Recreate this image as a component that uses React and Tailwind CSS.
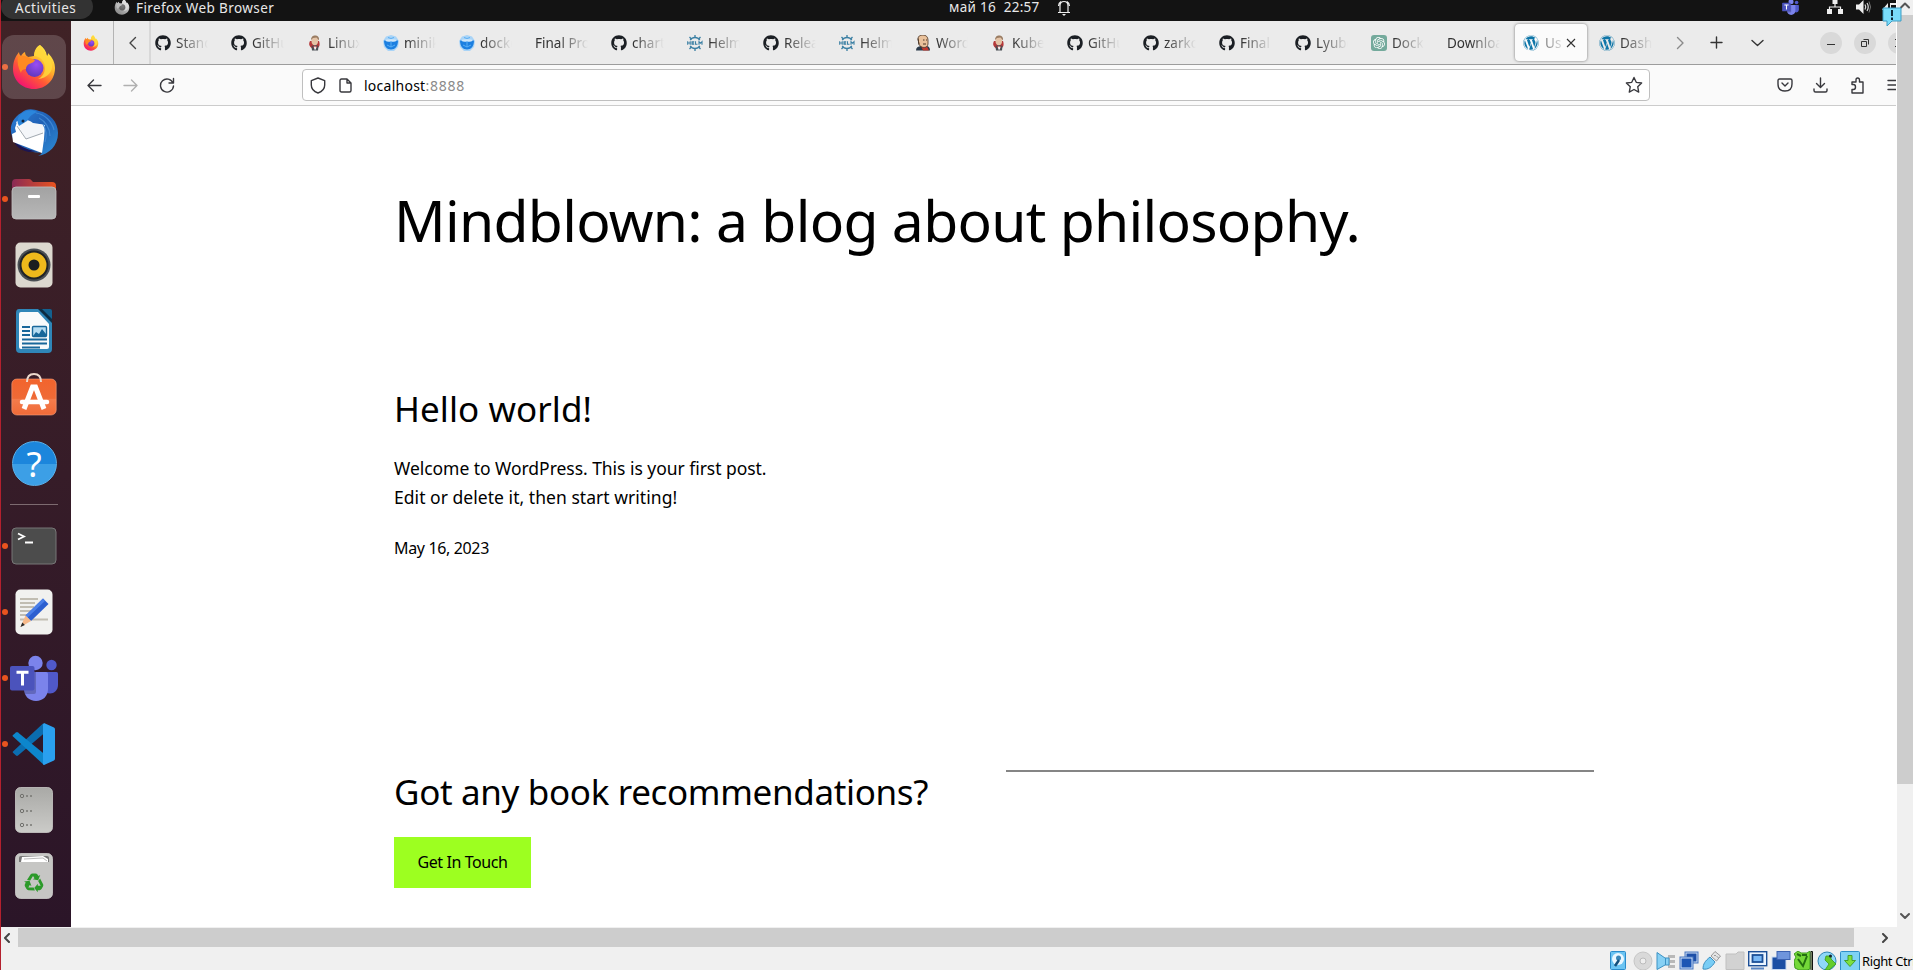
import { FaGithub, FaWordpress } from "react-icons/fa";
import { SiOpenai } from "react-icons/si";

/* ---------- colour logos ---------- */

function Firefox({ id, className, mono }) {
  return (
    <svg viewBox="0 0 44 46" className={className}>
      <defs>
        <linearGradient id={id + "a"} x1="0.85" y1="0.1" x2="0.25" y2="0.95">
          <stop offset="0" stopColor={mono ? "#f0f0f0" : "#fff04a"} />
          <stop offset="0.35" stopColor={mono ? "#c9c9c9" : "#ffb52a"} />
          <stop offset="0.65" stopColor={mono ? "#a5a5a5" : "#ff5a35"} />
          <stop offset="1" stopColor={mono ? "#8c8c8c" : "#f3156f"} />
        </linearGradient>
        <radialGradient id={id + "b"} cx="0.6" cy="0.3" r="0.8">
          <stop offset="0" stopColor={mono ? "#777" : "#9a4df5"} />
          <stop offset="1" stopColor={mono ? "#5a5a5a" : "#5a35b8"} />
        </radialGradient>
      </defs>
      <path
        d="M28 1c4 3 6 6 7 11 1-1 1-2 1-3 5 5 7 10 7 15 0 12-9 21-21 21S1 36 1 25c0-7 2-12 6-17 0 2 1 3 2 4 1-2 2-3 4-4 0 2 1 4 3 5l6-1c0-5 2-9 6-11z"
        fill={`url(#${id}a)`}
      />
      <circle cx="22.500" cy="24" r="9" fill={`url(#${id}b)`} />
      <path
        d="M6 13c5-2 9-1 12 1l5 2c-1 3-4 3-6 4-2 1-3 3-3 5-3 0-5 2-5 4C6 24 5 18 6 13z"
        fill={mono ? "#bdbdbd" : "#ff8a22"}
      />
      <path
        d="M28 1c-4 3-6 7-6 11 6 0 11 5 11 12 0 5-3 9-7 11 9-1 15-7 14-14-1-5-3-8-6-10-2-3-3-7-6-10z"
        fill={mono ? "#dedede" : "#ffd83c"}
        opacity="0.85"
      />
    </svg>
  );
}

function Thunderbird() {
  return (
    <svg viewBox="0 0 50 50" className="size-[50px]">
      <defs>
        <linearGradient id="tb1" x1="0" y1="0" x2="1" y2="1">
          <stop offset="0" stopColor="#2d7fd6" />
          <stop offset="0.5" stopColor="#1f5fb4" />
          <stop offset="1" stopColor="#2e8fd8" />
        </linearGradient>
      </defs>
      <path
        d="M12 5C18 0 24 1 30 3c11 2 19 11 19 22 0 13-9 21-20 23 3-1 4-3 4-4-8 2-20-2-26-9C-1 26 0 12 12 5z"
        fill="url(#tb1)"
      />
      <path d="M5 34c3 6 9 9 15 10l12-1c-10 1-19-4-27-9z" fill="#1c1552" />
      <path d="M8 14l28 3-1 14-2 14L4 34l-1-8 4-2-1-4z" fill="#fff" />
      <path d="M7 14c5-3 12-3 17 1 5 1 9 1 11 2l-1 9-17 5z" fill="#f4f6f9" />
      <path d="M8 18l9 13 17-6" fill="none" stroke="#8d959e" strokeWidth="0.8" />
      <path d="M10 8c5-6 13-7 18-4-5 2-8 5-10 9l-8 5c-2-3-2-7 0-10z" fill="#2b86dc" />
      <path d="M27 5c8 1 16 8 18 17M30 10c6 3 11 10 11 18M34 16c3 5 4 12 2 18" stroke="#3f86d2" strokeWidth="1.200" fill="none" />
      <circle cx="14" cy="13" r="1.500" fill="#10243e" />
    </svg>
  );
}

function Files() {
  return (
    <svg viewBox="0 0 46 42" className="h-[42px] w-[46px]">
      <defs>
        <linearGradient id="fl1">
          <stop offset="0" stopColor="#8a2a55" />
          <stop offset="1" stopColor="#e95420" />
        </linearGradient>
        <linearGradient id="fl2" x1="0" y1="0" x2="0" y2="1">
          <stop offset="0" stopColor="#a2a2a2" />
          <stop offset="1" stopColor="#b8b8b8" />
        </linearGradient>
      </defs>
      <path d="M1 5q0-4 4-4h13q2 0 3 2l1 1h19q4 0 4 4v8H1z" fill="url(#fl1)" />
      <rect x="1" y="9" width="44" height="32" rx="4" fill="url(#fl2)" stroke="#c2c2c2" strokeWidth="0.8" />
      <rect x="17" y="17" width="12" height="3" rx="1" fill="#fff" />
    </svg>
  );
}

function Rhythmbox() {
  return (
    <svg viewBox="0 0 38 46" className="h-[46px] w-[38px]">
      <rect x="0.500" y="0.500" width="37" height="45" rx="5" fill="#dcd8cf" />
      <circle cx="19" cy="23" r="16.500" fill="#4a4f54" />
      <circle cx="19" cy="23" r="14.500" fill="#202326" />
      <circle cx="19" cy="23" r="12.500" fill="#eeb91c" />
      <circle cx="19" cy="23" r="5.500" fill="#1b1d1f" />
    </svg>
  );
}

function Writer() {
  return (
    <svg viewBox="0 0 38 46" className="h-[46px] w-[38px]">
      <path d="M4 1h21l12 12v28q0 4-4 4H5q-4 0-4-4V5q0-4 3-4z" fill="#2f86b8" />
      <path d="M6 4h17l11 12v23q0 2-2 2H6q-2 0-2-2V6q0-2 2-2z" fill="#f8fafb" />
      <path d="M24 1l13 13V3q0-2-2-2z" fill="#14618f" />
      <path d="M23 1l14 14v-4L27 1z" fill="#0d2c42" />
      <path d="M7 19h8M7 23h8M7 27h8M7 31.500h25M7 35.500h25M7 39.500h18" stroke="#18679a" strokeWidth="1.800" />
      <rect x="17.500" y="18.500" width="14" height="10" rx="1" fill="#b5dcf2" stroke="#18679a" strokeWidth="1.400" />
      <path d="M18 28l3-4 3 2 3-5 4 5v2z" fill="#18679a" />
    </svg>
  );
}

function Software() {
  return (
    <svg viewBox="0 0 46 44" className="h-[44px] w-[46px]">
      <defs>
        <linearGradient id="sw1" x1="0" y1="0" x2="0" y2="1">
          <stop offset="0" stopColor="#f2642d" />
          <stop offset="0.540" stopColor="#ef6a36" />
          <stop offset="0.550" stopColor="#f47c4c" />
          <stop offset="1" stopColor="#f06a38" />
        </linearGradient>
      </defs>
      <rect x="0.800" y="7" width="44.400" height="36" rx="5" fill="url(#sw1)" stroke="#f5a07c" strokeWidth="0.600" />
      <path d="M16 10c0-5 2-8 7-8s7 3 7 8" fill="none" stroke="#ecd9cc" strokeWidth="2" />
      <path d="M13 37l8.500-22h3L33 37" fill="none" stroke="#fff" strokeWidth="5" />
      <path d="M11 30h25" stroke="#fff" strokeWidth="4.500" strokeLinecap="round" />
    </svg>
  );
}

function Help() {
  return (
    <div className="flex size-[45px] items-center justify-center rounded-full border border-[#5ab0ea] bg-linear-to-b from-[#1c86dc] from-50% to-[#3c9fe6] to-50% text-[35px] leading-none text-white">
      ?
    </div>
  );
}

function Terminal() {
  return (
    <svg viewBox="0 0 46 38" className="h-[38px] w-[46px]">
      <rect x="1" y="1" width="44" height="36" rx="4" fill="#4c4c4c" stroke="#777" strokeWidth="1" />
      <path d="M7 6.500l6 3-6 3M14 15.500h8" fill="none" stroke="#fff" strokeWidth="1.800" />
    </svg>
  );
}

function Editor() {
  return (
    <svg viewBox="0 0 38 46" className="h-[46px] w-[38px]">
      <rect x="0.500" y="0.500" width="37" height="45" rx="5" fill="#f1f1ef" />
      <path d="M5 10h18M5 14h15M5 18h14M5 22h13M5 26h10M5 30.500h28" stroke="#c1bdb2" strokeWidth="1.800" />
      <path d="M28 9.500l5.500 5.500L16 32l-5.500-5.500z" fill="#2c5fd0" />
      <path d="M28 9.500l2.200 2.200L12.600 28.600l-2.100-2.100z" fill="#4a7fe8" />
      <path d="M10.500 26.500L16 32l-10.500 6z" fill="#f6b98a" />
      <path d="M5.500 38l1.800-4.500 2.600 2.500z" fill="#2b2b2b" />
    </svg>
  );
}

function Teams({ className }) {
  return (
    <svg viewBox="0 0 48 46" className={className}>
      <circle cx="41.500" cy="10" r="5.200" fill="#5059c9" />
      <circle cx="25.500" cy="8" r="7.200" fill="#7b83eb" />
      <path d="M35 17h11.500q1.500 0 1.500 1.500V30c0 5-4 8.500-8 8.500-3 0-5-1-6-3z" fill="#5059c9" />
      <path d="M14 17h22q2 0 2 2v15c0 7-5 12-12 12s-12-5-12-12z" fill="#7b83eb" />
      <path d="M14 17h12v20q0 2-2 2H15q-1-2-1-5z" fill="#000" opacity="0.2" />
      <rect x="0" y="11" width="24.500" height="24.500" rx="2" fill="#4b53bc" />
      <path d="M6.500 17.200h12M12.500 17v13.500" stroke="#fff" strokeWidth="3" />
    </svg>
  );
}

function VsCode() {
  return (
    <svg viewBox="0 0 44 44" className="size-[44px]">
      <path d="M1 29.500L31 1.500 36 8 6 33.500q-1 .8-2 0l-3-2.700q-.8-.8 0-1.300z" fill="#0b6db0" />
      <path d="M1 14.500q-.8-.8 0-1.500l3-2.500q1-.8 2 0L36 35l-4 8z" fill="#0d86cc" />
      <path d="M32 1l10 4.500q1 .6 1 2v29q0 1.400-1 2L32 43q-1.500-.5-1-3V4q-.5-2 1-3z" fill="#2aa0ef" />
    </svg>
  );
}

function Drive() {
  return (
    <svg viewBox="0 0 38 46" className="h-[46px] w-[38px]">
      <defs>
        <linearGradient id="dr1" x1="0" y1="0" x2="0" y2="1">
          <stop offset="0" stopColor="#a9a9a6" />
          <stop offset="1" stopColor="#cbcbc8" />
        </linearGradient>
      </defs>
      <rect x="0.500" y="0.500" width="37" height="45" rx="5" fill="url(#dr1)" stroke="#d6d6d3" strokeWidth="0.700" />
      {[9, 24, 38].map((y) => (
        <g key={y} fill="#777773">
          <circle cx="7" cy={y} r="1.700" fill="none" stroke="#70706c" strokeWidth="1" />
          <circle cx="12" cy={y} r="1" />
          <circle cx="16" cy={y} r="1" />
        </g>
      ))}
    </svg>
  );
}

function Trash() {
  return (
    <svg viewBox="0 0 38 46" className="h-[46px] w-[38px]">
      <rect x="0.500" y="0.500" width="37" height="45" rx="5" fill="#c6c6c4" stroke="#dadad8" strokeWidth="0.700" />
      <path d="M4 9V5q0-2 2-2h26q2 0 2 2v4z" fill="#777" />
      <path d="M6 9l1-5 21-1 5 3v3z" fill="#fff" />
      <path d="M9 6l19-1 4 3" fill="none" stroke="#aaa" strokeWidth="0.800" />
      <g transform="translate(19 30)">
        {[0, 120, 240].map((a) => (
          <g key={a} transform={`rotate(${a})`}>
            <path d="M-7-3l3.500-5.500q.7-1 2-1h3q1.300 0 2 1l1 1.600 1.700-1-2 5.200-5.400-1 1.700-1-1.500-2.400-2.800 4.500z" fill="#2c9a2a" />
          </g>
        ))}
      </g>
    </svg>
  );
}

/* ---------- tab favicons ---------- */

const Github = () => <FaGithub className="size-4 text-[#1b1f24]" />;
const Wordpress = () => <FaWordpress className="size-4 text-[#0f76a8]" />;

function Jenkins() {
  return (
    <svg viewBox="0 0 16 16" className="size-4">
      <path d="M3 6C1.500 9 2 11 5 13.500h5c3-1.500 3-4.500 2-7.500z" fill="#b5383a" />
      <path d="M4.500 11l3.500-1 3.500 1-.5 4.500H5z" fill="#4a4f55" />
      <path d="M6.500 11.500L8 15.500l2-4z" fill="#fff" />
      <ellipse cx="7.800" cy="5.800" rx="3.300" ry="4.400" fill="#e4c3a6" />
      <path d="M4 5c0-4 3-5 5-4.500 2 .3 3.500 2 3 5L9.500 2.500 6 3z" fill="#9a7c62" />
      <path d="M6 11l2 1 2-1v1.500L8 12l-2 .5z" fill="#c32b2b" />
    </svg>
  );
}

function Minikube() {
  return (
    <svg viewBox="0 0 16 16" className="size-4">
      <path d="M3 1.500L8 0l5 1.500L16 6l-1 6-4 4H5l-4-4-1-6z" fill="#a9d4f7" />
      <path d="M1 5.500h14c0 6-3 9-7 9s-7-3-7-9z" fill="#1c7fe0" />
      <ellipse cx="8" cy="5.500" rx="5.500" ry="1.300" fill="#cfe7fb" />
      <path d="M4 10l4 2 4-2M5 2.500l3 1 3-1M8 6v6" stroke="#58aef5" strokeWidth="1" fill="none" />
    </svg>
  );
}

function Helm() {
  return (
    <svg viewBox="0 0 16 16" className="size-4">
      <g fill="none" stroke="#3a7fa3">
        <path d="M3.200 5.200a5.600 5.600 0 0 1 9.600 0M3.200 10.800a5.600 5.600 0 0 0 9.600 0" strokeWidth="1.300" />
        <path d="M8 0v2.500M8 13.500V16M2.500 2l1.800 2M13.500 2l-1.800 2M2.500 14l1.800-2M13.500 14l-1.800-2" strokeWidth="1.300" />
        <path d="M.7 6.200v3.600M3.200 6.200v3.600M.7 8h2.500M7.200 6.700H5v2.600h2.200M5 8h2M8.500 6.200v3.100h2M12 9.800V6.700l1.500 1.600L15 6.700v3.100" strokeWidth="1.100" />
      </g>
    </svg>
  );
}

function Artifact() {
  return (
    <svg viewBox="0 0 16 16" className="size-4">
      <path d="M1 15.500c0-3 2-4 5-4.500l3 2 3-2c2 .5 3 2 3 4.500z" fill="#2b3a4a" />
      <path d="M6 11l3 2 3-1.500 2 4H8z" fill="#c0392f" />
      <path d="M3 4c0-3 2-4 5-4s5 2 5 5v4c0 2-2 3.500-4 3.500S4.500 11 4 9.500z" fill="#e9c19b" stroke="#4a3425" strokeWidth="0.800" />
      <path d="M3 3.500c.500 2 .500 4 1 6M8 5h1.500M11 5h1M8 9h3" stroke="#4a3425" strokeWidth="1" fill="none" />
    </svg>
  );
}

function OpenAi() {
  return (
    <span className="flex size-4 items-center justify-center rounded-[3px] bg-[#74aa9c]">
      <SiOpenai className="size-3 text-white" />
    </span>
  );
}

const tabs = [
  [Github, "Stand"],
  [Github, "GitHu"],
  [Jenkins, "Linux"],
  [Minikube, "minik"],
  [Minikube, "docke"],
  [null, "Final Pro"],
  [Github, "chart"],
  [Helm, "Helm"],
  [Github, "Relea"],
  [Helm, "Helm"],
  [Artifact, "Wordp"],
  [Jenkins, "Kuber"],
  [Github, "GitHu"],
  [Github, "zarko"],
  [Github, "Final"],
  [Github, "Lyubo"],
  [OpenAi, "Dock"],
  [null, "Downloa"],
  [Wordpress, "Use", true],
  [Wordpress, "Dash"],
];

function Tab({ icon: Icon, label, active }) {
  return (
    <div className="flex h-full w-[76px] shrink-0 items-center px-0.5">
      <div
        className={
          active
            ? "flex h-[37px] w-[72px] items-center gap-[6px] rounded-[4px] bg-[#fbfbfb] pl-2 shadow-[0_0_3px_rgba(0,0,0,0.5)]"
            : "flex h-[37px] w-[72px] items-center gap-[5px] pl-2"
        }
      >
        {Icon && (
          <span className="shrink-0">
            <Icon />
          </span>
        )}
        {active ? (
          <span className="w-[16px] overflow-hidden pt-[2px] text-[13.5px] tracking-[0.2px] whitespace-nowrap text-[#555] [mask-image:linear-gradient(to_right,rgba(0,0,0,0.75),rgba(0,0,0,0.2))]">
            {label}
          </span>
        ) : (
          <span className="mr-[9px] flex-1 overflow-hidden pt-[2px] text-[13.5px] whitespace-nowrap text-[#333] [mask-image:linear-gradient(to_left,transparent_2px,black_32px)]">
            {label}
          </span>
        )}
        {active && (
          <svg viewBox="0 0 10 10" className="-ml-px size-[10px] shrink-0" stroke="#333" strokeWidth="1.100">
            <path d="M1 1l8 8M9 1l-8 8" />
          </svg>
        )}
      </div>
    </div>
  );
}

const Line = ({ d, className, color = "#38383d", width = 1.4, box = "0 0 16 16" }) => (
  <svg viewBox={box} className={className} fill="none" stroke={color} strokeWidth={width} strokeLinecap="round" strokeLinejoin="round">
    <path d={d} />
  </svg>
);

function TopBar() {
  return (
    <div className="flex h-[21px] shrink-0 items-center overflow-hidden bg-[#131313] text-[13.5px] text-[#e8e8e8]">
      <div className="-mt-[8px] flex h-[25px] w-[92px] shrink-0 items-end rounded-full bg-[#333] pb-[2px] pl-[14px] leading-[18px]">
        <span className="tracking-[0.5px]">Activities</span>
      </div>
      <Firefox id="mono" mono className="-mt-[7px] ml-[21px] size-[16px]" />
      <span className="-mt-[5px] ml-[6px] w-[813px] shrink-0 tracking-[0.4px]">Firefox Web Browser</span>
      <span className="-mt-[6px] w-[92px] shrink-0 whitespace-pre tracking-[0.3px]">май 16  22:57</span>
      <svg viewBox="0 0 14 16" className="-mt-[5px] ml-[16px] h-[16px] w-[14px]" fill="none" stroke="#eee" strokeWidth="1.200">
        <path d="M3 12V6q0-4.500 4-4.500T11 6v6M1 12.500h12M1.500 6q0-3 2.500-4.500M12.500 6q0-3-2.500-4.500" />
        <path d="M5 14h4l-2 2z" fill="#eee" stroke="none" />
      </svg>
      <Teams className="-mt-[7px] ml-[711px] h-[16px] w-[17px]" />
      <svg viewBox="0 0 16 14" className="-mt-[7px] ml-[28px] h-[14px] w-[16px]" fill="#eee">
        <path d="M5.500 0h5v4h-5zM0 9h5v5H0zM11 9h5v5h-5z" />
        <path d="M8 4v3M2.500 9V7h11v2" fill="none" stroke="#eee" strokeWidth="1.200" />
      </svg>
      <svg viewBox="0 0 16 14" className="-mt-[7px] ml-[13px] h-[14px] w-[16px]">
        <path d="M0 4.500h3L7.500 0v14L3 9.500H0z" fill="#eee" />
        <path d="M9 4.500q1.500 2.500 0 5M11 3q2.500 4 0 8" fill="none" stroke="#ddd" strokeWidth="1.200" />
        <path d="M13 1.500q3 5.500 0 11" fill="none" stroke="#777" />
      </svg>
      <svg viewBox="0 0 14 8" className="-mt-[9px] ml-[10px] h-[8px] w-[14px]">
        <path d="M0 8l6-7v7zM8 1h6v2H9v5H8z" fill="#eee" />
      </svg>
    </div>
  );
}

const dock = [
  { C: () => <Firefox id="dock" className="h-[46px] w-[44px]" />, run: true, active: true },
  { C: Thunderbird },
  { C: Files, run: true },
  { C: Rhythmbox },
  { C: Writer },
  { C: Software, lift: true },
  { C: Help },
  { sep: true },
  { C: Terminal, run: true },
  { C: Editor, run: true },
  { C: () => <Teams className="h-[46px] w-[48px]" />, run: true },
  { C: VsCode, run: true },
  { C: Drive },
  { C: Trash },
];

function Dock() {
  return (
    <nav className="flex w-[70px] shrink-0 flex-col bg-linear-to-b from-[#402226] via-[#361c28] to-[#2b1528] pt-[13px]">
      {dock.map((d, i) =>
        d.sep ? (
          <div key={i} className="flex h-[17px] items-center pl-[9px]">
            <div className="h-px w-[48px] bg-[#7d6a70]" />
          </div>
        ) : (
          <div key={i} className="flex h-[66px] items-center">
            <span className={d.run ? "-mr-[7px] ml-[1px] size-[6px] rounded-full bg-[#e9541f]" : "-mr-[7px] ml-[1px] size-[6px]"} />
            <div className={d.active ? "ml-[1px] flex size-[64px] items-center justify-center rounded-[12px] bg-white/17" : "ml-[1px] flex size-[64px] items-center justify-center"}>
              <div className={d.lift ? "-mt-[6px]" : ""}>
                <d.C />
              </div>
            </div>
          </div>
        )
      )}
    </nav>
  );
}

function TabStrip() {
  return (
    <div className="flex h-[44px] shrink-0 overflow-hidden border-b border-[#9c9c9c] bg-[#ebebeb]">
      <div className="flex w-[43px] shrink-0 items-center border-r border-[#b4b4b4] pl-[12px]">
        <Firefox id="pin" className="size-[16px]" />
      </div>
      <div className="flex w-[37px] shrink-0 items-center border-r-2 border-[#d8d8d8] pl-[14px]">
        <Line className="h-[14px] w-[9px]" box="0 0 9 14" d="M7.500 1.500L2 7l5.500 5.500" color="#444" />
      </div>
      <div className="flex w-[1514px] shrink-0 overflow-hidden">
        <div className="-ml-[6px] flex">
          {tabs.map(([icon, label, active], i) => (
            <Tab key={i} icon={icon} label={label} active={active} />
          ))}
        </div>
      </div>
      <div className="flex items-center">
        <Line className="ml-[11px] h-[14px] w-[9px]" box="0 0 9 14" d="M1.500 1.500L7 7l-5.500 5.500" color="#8a8a8a" />
        <Line className="ml-[25px] size-[13px]" box="0 0 13 13" d="M6.500 1v11M1 6.500h11" color="#333" />
        <Line className="ml-[28px] h-[8px] w-[13px]" box="0 0 13 8" d="M1 1.500l5.500 5 5.500-5" color="#333" />
      </div>
      <div className="ml-[56px] flex items-center gap-[12px]">
        <span className="flex size-[22px] items-center justify-center rounded-full bg-[#d9d9d9]">
          <span className="mt-[4px] h-px w-2 bg-[#333]" />
        </span>
        <span className="flex size-[22px] items-center justify-center rounded-full bg-[#d9d9d9]">
          <svg viewBox="0 0 10 10" className="size-[10px]" fill="none" stroke="#333">
            <path d="M1.500 3.500h5v5h-5zM3.500 1.500h5v5" />
          </svg>
        </span>
        <span className="flex size-[22px] shrink-0 items-center rounded-full bg-[#d9d9d9] pl-[6px]">
          <svg viewBox="0 0 10 10" className="size-[10px]" stroke="#333">
            <path d="M1 1l8 8M9 1l-8 8" />
          </svg>
        </span>
      </div>
    </div>
  );
}

function NavBar() {
  return (
    <div className="flex h-[41px] shrink-0 items-center overflow-hidden border-b border-[#cccccc] bg-[#fafafa]">
      <Line className="ml-[16px] h-[13px] w-[15px] shrink-0" box="0 0 15 13" d="M14 6.500H1M6.500 1L1 6.500 6.500 12" />
      <Line className="ml-[21px] h-[13px] w-[15px] shrink-0" box="0 0 15 13" d="M1 6.500h13M8.500 1L14 6.500 8.500 12" color="#b0b0b0" />
      <Line className="ml-[21px] size-[16px] shrink-0" d="M14 6A6.500 6.500 0 1 0 14.500 9M14.500 1.500V6H10" />
      <div className="ml-[127px] flex h-[32px] w-[1348px] shrink-0 items-center rounded-[4px] border border-[#bfbfbf] bg-white">
        <Line className="ml-[7px] h-[17px] w-[16px]" box="0 0 16 17" d="M8 1l6.700 2.700V8c0 4-3 6.700-6.700 8-3.700-1.300-6.700-4-6.700-8V3.700z" />
        <Line className="ml-[13px] h-[15px] w-[13px]" box="0 0 13 15" d="M1 2.500Q1 1 2.500 1H8l4 4v7.500q0 1.500-1.500 1.500h-8Q1 14 1 12.500zM8 1v4h4" />
        <span className="ml-[12px] text-[14px] tracking-[0.25px] text-black">
          localhost<span className="tracking-[0.75px] text-[#8a8a8a]">:8888</span>
        </span>
        <Line className="mr-[6px] ml-auto size-[18px]" d="M8 1.300l2 4.300 4.800.600-3.500 3.300.9 4.800L8 12l-4.200 2.300.9-4.800L1.200 6.200 6 5.600z" width={1.2} />
      </div>
      <Line className="ml-[127px] h-[14px] w-[16px] shrink-0" box="0 0 16 14" d="M2.500 1h11Q15 1 15 2.500V6q0 7-7 7T1 6V2.500Q1 1 2.500 1zM5 5l3 3 3-3" />
      <Line className="ml-[20px] h-[16px] w-[15px] shrink-0" box="0 0 15 16" d="M7.500 1v9M3.500 6.500l4 4 4-4M1 12v1.500Q1 15 2.500 15h10q1.500 0 1.500-1.500V12" />
      <Line className="ml-[22px] h-[17px] w-[15px] shrink-0" box="0 0 15 17" d="M2 7.500V5h4V3q0-2 1.700-2T9.500 3v2H13v11H2v-3.500h1.500q2 0 2-2.500t-2-2.500z" />
      <Line className="ml-[22px] h-[12px] w-[13px] shrink-0" box="0 0 13 12" d="M1 1.500h14M1 6h14M1 10.500h14" />
    </div>
  );
}

function Page() {
  return (
    <main className="flex-1 overflow-hidden bg-white pl-[323px] text-black">
      <h1 className="mt-[74px] h-[80px] text-[57px] leading-[80px] tracking-[-0.72px] whitespace-nowrap">
        Mindblown: a blog about philosophy.
      </h1>
      <h2 className="mt-[124px] h-[50px] text-[35px] leading-[50px] tracking-[0.08px] whitespace-nowrap">Hello world!</h2>
      <p className="mt-[20px] w-[460px] text-[17.5px] leading-[29px] whitespace-nowrap">
        <span className="tracking-[-0.04px]">Welcome to WordPress. This is your first post.</span>
        <br />
        <span className="tracking-[0.04px]">Edit or delete it, then start writing!</span>
      </p>
      <p className="mt-[24px] text-[16px] leading-[24px] tracking-[-0.35px]">May 16, 2023</p>
      <div className="mt-[210px] flex">
        <div className="w-[612px] shrink-0">
          <h2 className="h-[45px] text-[35px] leading-[43px] tracking-[-0.35px] whitespace-nowrap">
            Got any book recommendations?
          </h2>
          <button className="mt-[22px] flex h-[51px] w-[137px] items-center justify-center bg-[#9dff20] pb-[2px] text-[16px] tracking-[-0.4px] whitespace-nowrap">
            Get In Touch
          </button>
        </div>
        <div className="h-[2px] w-[588px] bg-[#858585]" />
      </div>
    </main>
  );
}

function VScroll() {
  return (
    <div className="flex h-[927px] w-[17px] shrink-0 flex-col items-center border-l border-white bg-[#f0f0f0]">
      <Line className="h-[15px] w-[10px]" box="0 0 10 15" d="M1 7.500l4-4 4 4" color="#555" width={2} />
      <div className="h-[769px] w-full bg-[#cdcdcd]" />
      <Line className="mt-auto mb-[6px] h-[10px] w-[10px]" box="0 0 10 10" d="M1 3l4 4 4-4" color="#555" width={2} />
    </div>
  );
}

const statusIcons = [
  <>
    <rect x="0.500" y="0.500" width="15" height="18" rx="1" fill="#6cc4f2" stroke="#2b8ccc" />
    <circle cx="8" cy="8" r="6" fill="#eaf7ff" />
    <circle cx="8.500" cy="7" r="2.500" fill="#3a86b8" />
    <path d="M9 9l-4 6" stroke="#14507c" strokeWidth="2.500" />
  </>,
  <>
    <circle cx="10" cy="10" r="9" fill="#d9d9d9" stroke="#c6c6c6" />
    <circle cx="10" cy="10" r="3" fill="#eee" stroke="#bbb" />
  </>,
  <>
    <path d="M12 4h7v3h-5v2h5v3h-5v2h5v3h-7z" fill="#b8b8b8" />
    <path d="M1 1.500l8 5.500h4v7H9l-8 4.500z" fill="#86d0f4" stroke="#3c92c4" />
    <path d="M9.500 7v7" stroke="#3c92c4" />
  </>,
  <>
    <rect x="6" y="1" width="13" height="11" fill="#1d4fa8" stroke="#4a78c0" />
    <rect x="7" y="2" width="11" height="9" fill="none" stroke="#d5e6fa" />
    <rect x="1" y="6" width="13" height="12" fill="#1c55b4" stroke="#4a78c0" />
    <rect x="2" y="7" width="11" height="10" fill="none" stroke="#d5e6fa" />
  </>,
  <>
    <path d="M1 18c0-5 2-8 7-12l5 5c-3 5-7 8-12 7z" fill="#79cdf5" stroke="#3c8fc0" />
    <path d="M9 5l4-4.500L18.500 5l-4 5z" fill="#e4e4e4" stroke="#999" />
    <path d="M12.500 4l1 1M15 5.500l1 1" stroke="#555" />
  </>,
  <path d="M1 18.500V3h10l2-2h6v17.500z" fill="#d2d2d2" stroke="#c0c0c0" />,
  <>
    <rect x="0.700" y="0.700" width="18" height="14" fill="#eaf4ff" stroke="#1c4f96" strokeWidth="1.400" />
    <rect x="4.500" y="4" width="10" height="7" fill="#7ab8f5" stroke="#1c4f96" strokeWidth="1.800" />
    <path d="M3 17.500h13" stroke="#5a86c4" strokeWidth="2" />
  </>,
  <>
    <rect x="1" y="6" width="14" height="12.500" fill="#1c4fa4" stroke="#c7d9f2" />
    <rect x="6" y="0.500" width="13" height="8" fill="#6f95dc" stroke="#3c62b0" />
  </>,
  <>
    <path d="M0 3l4-3 3 2h6l3-2v18l-3 1H5l-4-2-1-7 2-4z" fill="#74d838" stroke="#3c9a1c" />
    <path d="M4 8l5 7 4-10M3 3l4 2M8 4h5" stroke="#247010" strokeWidth="2" fill="none" />
    <path d="M17 .5h1.500v19H17z" fill="#d8f0b0" stroke="#111" />
  </>,
  <>
    <circle cx="10" cy="10" r="9" fill="#8fd8f8" stroke="#3186b5" />
    <path d="M9 5h5v3l5 5-7 6H8l4-6-4-4z" fill="#66cc2a" stroke="#3a9a18" strokeWidth="0.800" />
    <circle cx="13.500" cy="5" r="1.500" fill="#123" />
  </>,
  <>
    <rect x="0.500" y="0.500" width="19" height="20" rx="1" fill="#7fd2f5" stroke="#2f8fc8" />
    <path d="M8 4.500h4v5h3.500L10 15.500 4.500 9.500H8z" fill="#7fe040" stroke="#3c9a22" strokeWidth="0.900" />
  </>,
];

export default function App() {
  return (
    <div className="relative flex h-[970px] w-[1913px] overflow-hidden border-l border-[#b3202e] bg-[#f0f0f0] font-['Noto_Sans','Open_Sans',sans-serif]">
      <div className="flex w-full flex-col">
        <div className="flex h-[927px] shrink-0">
          <div className="flex w-[1895px] shrink-0 flex-col">
            <TopBar />
            <div className="flex min-h-0 flex-1">
              <Dock />
              <div className="flex min-w-0 flex-1 flex-col">
                <TabStrip />
                <NavBar />
                <Page />
              </div>
            </div>
          </div>
          <VScroll />
        </div>
        <div className="mt-px flex h-[19px] shrink-0 items-center">
          <Line className="ml-px size-[10px]" box="0 0 10 10" d="M7 1L3 5l4 4" color="#444" width={2} />
          <div className="ml-[6px] h-full w-[1836px] bg-[#cdcdcd]" />
          <Line className="ml-[26px] size-[10px]" box="0 0 10 10" d="M3 1l4 4-4 4" color="#444" width={2} />
        </div>
        <div className="flex h-[23px] shrink-0 items-end overflow-hidden pl-[1609px]">
          {statusIcons.map((s, i) => (
            <svg key={i} viewBox="0 0 20 19" className="mr-[3px] h-[19px] w-[20px] shrink-0">
              {s}
            </svg>
          ))}
          <span className="-ml-px text-[13px] leading-[18px] tracking-[-0.4px] whitespace-nowrap text-black">Right Ctrl</span>
        </div>
      </div>
      <svg viewBox="0 0 20 20" className="absolute top-[7px] left-[1881px] size-[20px]">
        <path d="M1 1h18v13h-9l-5 5v-5H1z" fill="#79dcfa" stroke="#3f9dc4" />
        <path d="M10 3v6M10 10.500V13" stroke="#0c2a3a" strokeWidth="2" />
      </svg>
    </div>
  );
}
